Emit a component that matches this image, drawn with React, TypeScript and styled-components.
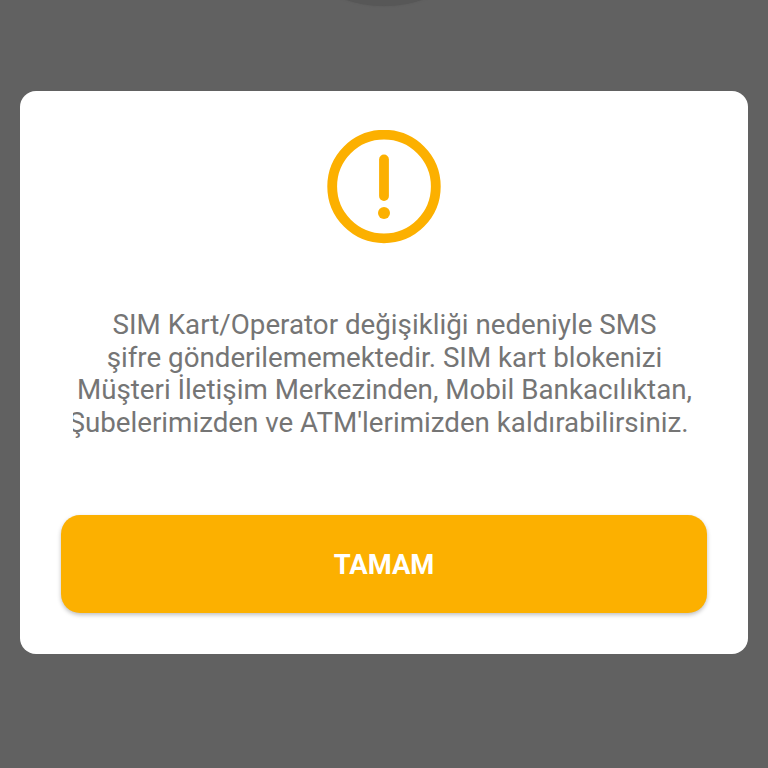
import styled, { createGlobalStyle } from 'styled-components';

const App = () => {
    return (
        <>
            <GlobalStyle />
            <Screen>
                <Knob />
                <Dialog>
                    <WarningIcon viewBox="0 0 114 114">
                        <circle cx="57" cy="56.5" r="51.8" />
                        <path d="M57 29.5v36.5" />
                        <circle className="dot" cx="57" cy="83" r="6" />
                    </WarningIcon>
                    <Message>
                        <Line>SIM Kart/Operator değişikliği nedeniyle SMS</Line>
                        <Line>şifre gönderilememektedir. SIM kart blokenizi</Line>
                        <Line>Müşteri İletişim Merkezinden, Mobil Bankacılıktan,</Line>
                        <Line $shift={-11}>Şubelerimizden ve ATM'lerimizden kaldırabilirsiniz.</Line>
                    </Message>
                    <OkButton>TAMAM</OkButton>
                </Dialog>
            </Screen>
        </>
    )
}

export default App;

const GlobalStyle = createGlobalStyle`
    body {
        margin: 0;
        background-color: #616161;
        font-family: Roboto, "Liberation Sans", sans-serif;
    }
`

const Screen = styled.div`
    display: flex;
    flex-direction: column;
    align-items: center;
    height: 768px;
    overflow: hidden;
    background-color: #616161;
`

const Knob = styled.div`
    flex: none;
    width: 240px;
    height: 240px;
    margin-top: -234px;
    margin-bottom: 85px;
    border-radius: 50%;
    background-color: #575757;
    box-shadow: 0 0 2px #575757;
`

const Dialog = styled.div`
    box-sizing: border-box;
    display: flex;
    flex: none;
    flex-direction: column;
    align-items: center;
    width: 728px;
    height: 563px;
    padding: 39px 41px 41px;
    border-radius: 16px;
    background-color: #fff;
`

const WarningIcon = styled.svg`
    flex: none;
    width: 114px;
    height: 114px;
    fill: none;
    stroke: #fcb000;
    stroke-width: 9.8;
    stroke-linecap: round;

    .dot {
        fill: #fcb000;
        stroke: none;
    }
`

const Message = styled.div`
    display: flex;
    flex-direction: column;
    align-items: center;
    width: 622px;
    margin-top: 65px;
    overflow: hidden;
    color: #757575;
`

const Line = styled.div<{ $shift?: number }>`
    height: 32.7px;
    margin-left: ${({ $shift = 1 }) => $shift}px;
    font-size: 27.74px;
    line-height: 32.7px;
    white-space: nowrap;
`

const OkButton = styled.button`
    width: 646px;
    height: 98px;
    margin-top: auto;
    padding: 2px 0 0;
    border: none;
    border-radius: 19px;
    background-color: #fcb000;
    box-shadow: 0 2px 4px rgba(0, 0, 0, 0.25);
    color: #fff;
    font-family: inherit;
    font-size: 27.4px;
    font-weight: 700;
`
